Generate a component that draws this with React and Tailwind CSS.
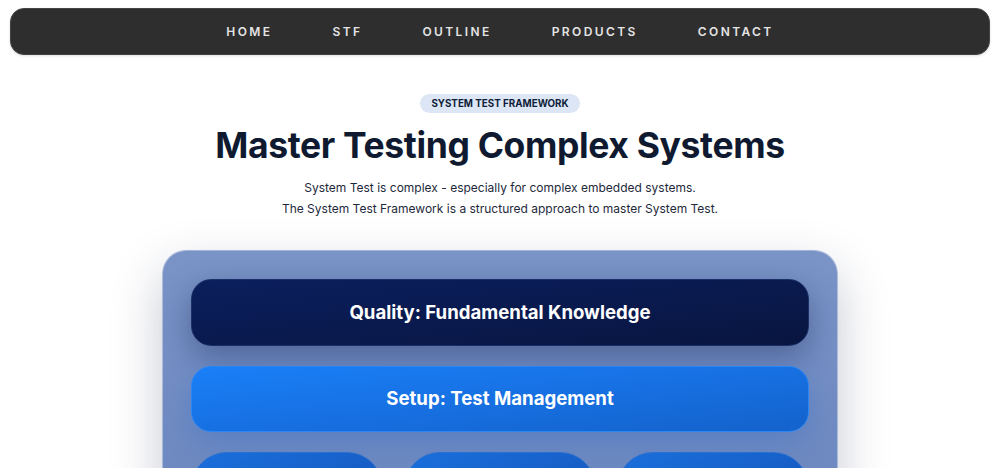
export default function App() {
  const nav = ["HOME", "STF", "OUTLINE", "PRODUCTS", "CONTACT"]

  return (
    <div className="min-h-screen bg-white font-['Inter',sans-serif] overflow-hidden h-[468px]">
      <div className="px-[10px] pt-[8px]">
        <nav className="h-[47px] rounded-[14px] bg-[#2e2e2e] border border-[#444] flex items-center justify-center gap-[60px] shadow-sm">
          {nav.map((item) => (
            <a
              key={item}
              href="#"
              className="text-[12px] font-semibold tracking-[0.2em] text-[#e4e4e4]"
            >
              {item}
            </a>
          ))}
        </nav>
      </div>

      <header className="flex flex-col items-center pt-[39px]">
        <span className="px-[11px] py-[4px] rounded-full bg-[#dce6f5] text-[9.8px] leading-[11px] font-bold tracking-normal text-[#0f1d3a]">
          SYSTEM TEST FRAMEWORK
        </span>
        <h1 className="mt-[11px] text-[35.5px] leading-[44px] font-bold tracking-[-0.01em] text-[#0f1a30]">
          Master Testing Complex Systems
        </h1>
        <div className="mt-[9px] text-center text-[12px] leading-[21px] text-[#1e293b]">
          <p>System Test is complex - especially for complex embedded systems.</p>
          <p>The System Test Framework is a structured approach to master System Test.</p>
        </div>
      </header>

      <section className="mt-[31px] flex justify-center">
        <div className="w-[676px] rounded-[24px] border border-white/40 bg-gradient-to-b from-[#7b94c7] to-[#6683bd] p-[28px] shadow-[0_20px_50px_rgba(30,41,80,0.25)] flex flex-col gap-[20px]">
          <div className="h-[67px] rounded-[20px] bg-gradient-to-br from-[#0b1f5e] to-[#08153f] border border-[#1d2f6b] shadow-[0_10px_30px_rgba(10,20,60,0.35)] flex items-center justify-center">
            <span className="text-[18.6px] font-bold text-white">Quality: Fundamental Knowledge</span>
          </div>
          <div className="h-[66px] rounded-[20px] bg-gradient-to-br from-[#1a7ff8] to-[#1462cc] border border-[#2a86f5] shadow-[0_10px_30px_rgba(20,90,200,0.25)] flex items-center justify-center">
            <span className="text-[18.6px] font-bold text-white">Setup: Test Management</span>
          </div>
          <div className="grid grid-cols-3 gap-[21px]">
            {[0, 1, 2].map((i) => (
              <div
                key={i}
                className="h-[120px] rounded-[36px] bg-gradient-to-br from-[#1a6fdc] to-[#1450b4] border border-[#2a70d0]"
              />
            ))}
          </div>
        </div>
      </section>
    </div>
  )
}
